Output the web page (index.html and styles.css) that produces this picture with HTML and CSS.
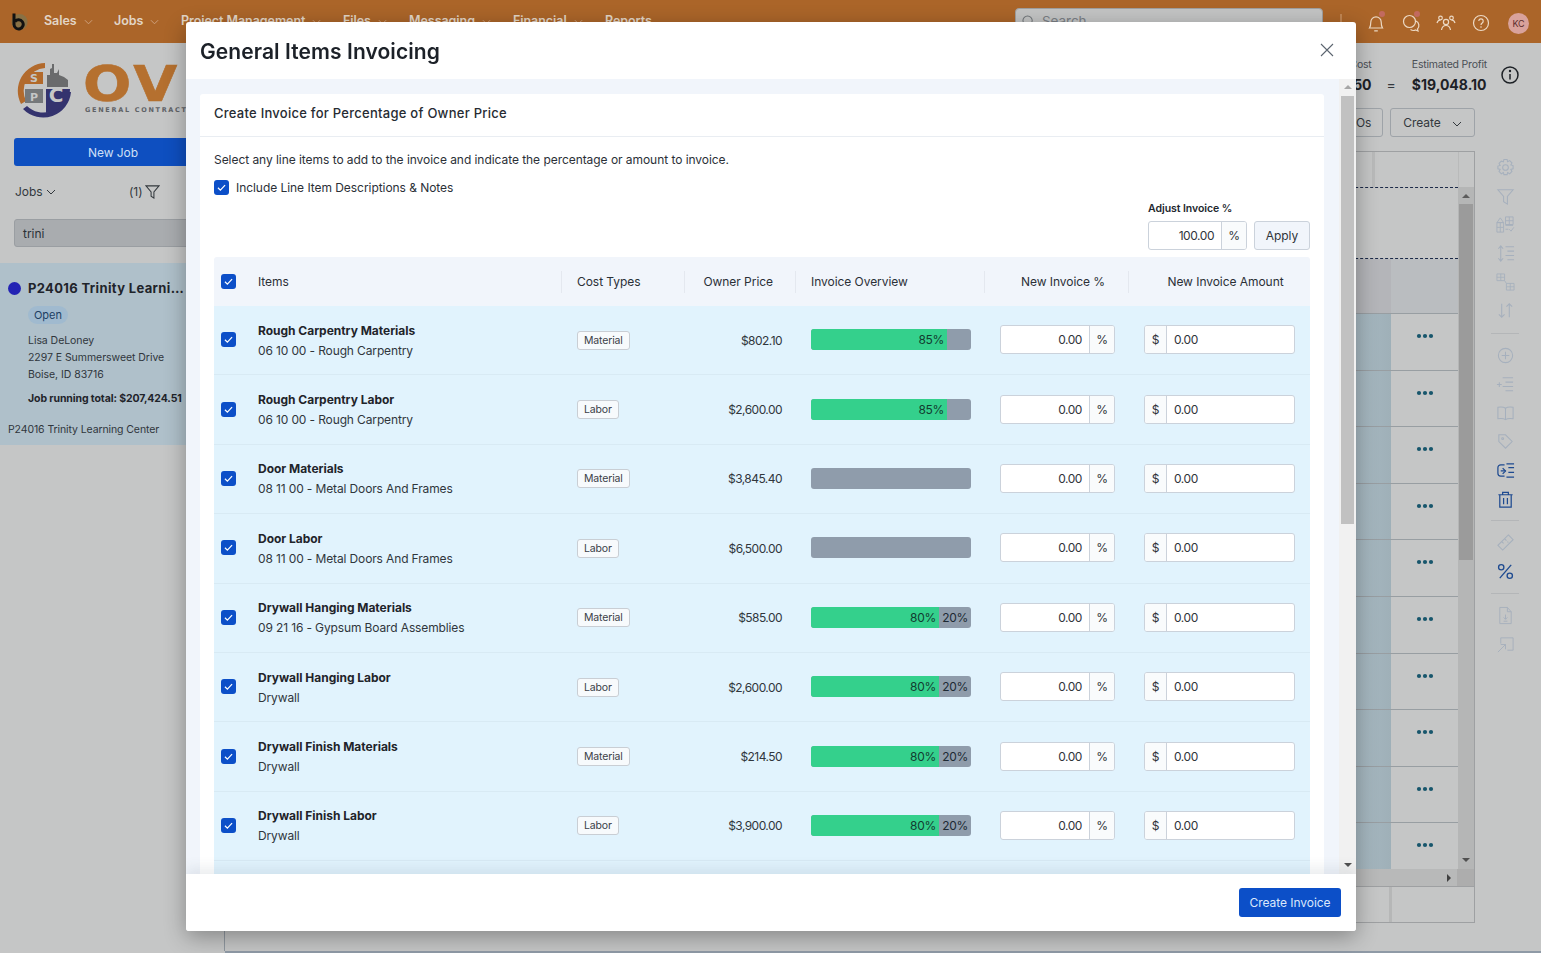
FILE: index.html
```html
<!DOCTYPE html>
<html lang="en">
<head>
<meta charset="utf-8">
<title>General Items Invoicing</title>
<link rel="stylesheet" href="styles.css">
</head>
<body>
<svg class="sprite" aria-hidden="true">
  <symbol id="check" viewBox="0 0 16 16"><path d="M4.2 8.3l2.6 2.6 5-5.4" fill="none" stroke="#fff" stroke-width="1.3"/></symbol>
  <symbol id="chev" viewBox="0 0 10 6"><path d="M1 1l4 4 4-4" fill="none" stroke="currentColor" stroke-width="1"/></symbol>
  <symbol id="dots" viewBox="0 0 18 6"><circle cx="3" cy="3" r="2.1"/><circle cx="9" cy="3" r="2.1"/><circle cx="15" cy="3" r="2.1"/></symbol>
</svg>

<div class="app">
  <header class="topbar">
    <svg class="brand" viewBox="0 0 20 20"><circle cx="10.500" cy="11" r="8" fill="#6d7b5c" opacity=".55"/><path d="M5 2.500v11a4.600 4.600 0 1 0 1-3" fill="none" stroke="#111" stroke-width="3"/></svg>
    <nav class="nav">
      <span class="nav-item nav-sales">Sales <svg class="nav-chev"><use href="#chev"/></svg></span>
      <span class="nav-item nav-jobs">Jobs <svg class="nav-chev"><use href="#chev"/></svg></span>
      <span class="nav-item nav-pm">Project Management <svg class="nav-chev"><use href="#chev"/></svg></span>
      <span class="nav-item nav-files">Files <svg class="nav-chev"><use href="#chev"/></svg></span>
      <span class="nav-item nav-msg">Messaging <svg class="nav-chev"><use href="#chev"/></svg></span>
      <span class="nav-item nav-fin">Financial <svg class="nav-chev"><use href="#chev"/></svg></span>
      <span class="nav-item">Reports</span>
    </nav>
    <div class="search">
      <svg class="search-icon" viewBox="0 0 14 14"><circle cx="6" cy="6" r="5" fill="none" stroke="#6f7478" stroke-width="1.100"/></svg>
      <span>Search</span>
    </div>
    <div class="top-icons">
      <svg class="top-icon" viewBox="0 0 20 20"><path d="M10 1v18M1 10h18" stroke="#d6a77c" stroke-width="1" fill="none"/></svg>
      <span class="top-icon-wrap"><svg class="top-icon" viewBox="0 0 20 20"><path d="M3.500 15c1.200-1.700 1.300-3.500 1.300-6a5.200 5.200 0 0 1 10.400 0c0 2.500.1 4.300 1.300 6zM8.200 17.800h3.600" fill="none" stroke="#ecd9c4" stroke-width="1.200"/></svg><i class="dot"></i></span>
      <span class="top-icon-wrap"><svg class="top-icon" viewBox="0 0 20 20"><circle cx="8.500" cy="8.500" r="6" fill="none" stroke="#ecd9c4" stroke-width="1.200"/><path d="M15 8a5 5 0 0 1 1.500 8l.5 2-2.500-1a5 5 0 0 1-5-.5" fill="none" stroke="#ecd9c4" stroke-width="1.200"/></svg><i class="dot"></i></span>
      <svg class="top-icon" viewBox="0 0 20 20"><g fill="none" stroke="#ecd9c4" stroke-width="1.200"><circle cx="10" cy="9" r="2.600"/><circle cx="4.500" cy="5" r="1.800"/><circle cx="15.500" cy="5" r="1.800"/><path d="M5.500 17c.5-3 2-4.500 4.500-4.500s4 1.500 4.500 4.500M1 10c.5-2 1.500-3 3.500-3M19 10c-.5-2-1.500-3-3.500-3"/></g></svg>
      <svg class="top-icon" viewBox="0 0 20 20"><g fill="none" stroke="#ecd9c4" stroke-width="1.200"><circle cx="10" cy="10" r="7.500"/><path d="M7.800 8a2.200 2.200 0 1 1 3.400 1.900c-.8.500-1.200 1-1.200 2"/></g><circle cx="10" cy="14" r=".8" fill="#ecd9c4"/></svg>
      <span class="avatar">KC</span>
    </div>
  </header>

  <div class="main">
    <aside class="sidebar">
      <div class="logo">
        <svg class="logo-mark" viewBox="0 0 58 57">
          <path d="M31 1A28 28 0 0 0 7 42l5-3A23 23 0 0 1 31 6z" fill="#b26a2c"/>
          <path d="M9 47a28 28 0 0 0 48-17h-5a23 23 0 0 1-39 14z" fill="#34336e"/>
          <rect x="11" y="10" width="18" height="12" fill="#b26a2c"/>
          <path d="M33 25V13h3V7l2-1v-4h2v9h3l2-4v6l5 2 4 3v7z" fill="#6a6b6c"/>
          <rect x="11" y="27" width="18" height="14" fill="#75787a"/>
          <path d="M32 27h24c0 12-9 22-24 24z" fill="#34336e"/>
          <text x="20" y="20" class="logo-letter">S</text><text x="20" y="38.500" class="logo-letter">P</text><text x="42" y="40" class="logo-letter logo-letter-big">C</text>
        </svg>
        <div class="logo-words"><span class="logo-ov">OV</span><span class="logo-sub">GENERAL CONTRACTORS</span></div>
      </div>
      <button class="new-job">New Job</button>
      <div class="filter-row">
        <span class="jobs-select">Jobs <svg class="mini-chev"><use href="#chev"/></svg></span>
        <span class="filter-count">(1)<svg class="filter-ico" viewBox="0 0 16 16"><path d="M1 2h14L9.500 8.500V15l-3-2V8.500z" fill="none" stroke="#33383d" stroke-width="1.100"/></svg></span>
      </div>
      <div class="side-search">trini</div>
      <article class="job-card">
        <div class="job-title"><i class="job-dot"></i><span class="job-name">P24016 Trinity Learning Center</span></div>
        <div class="job-details">
          <span class="pill">Open</span>
          <p class="addr">Lisa DeLoney</p>
          <p class="addr">2297 E Summersweet Drive</p>
          <p class="addr">Boise, ID 83716</p>
          <p class="running">Job running total: $207,424.51</p>
        </div>
        <p class="job-foot">P24016 Trinity Learning Center</p>
      </article>
    </aside>

    <section class="content">
      <div class="stats">
        <div class="stat stat-cost"><span class="stat-label">Cost</span><strong class="stat-val">50</strong></div>
        <span class="stat-eq">=</span>
        <div class="stat"><span class="stat-label">Estimated Profit</span><strong class="stat-val">$19,048.10</strong></div>
        <svg class="info" viewBox="0 0 20 20"><g fill="none" stroke="#1d2126" stroke-width="1.500"><circle cx="10" cy="10" r="8"/><path d="M10 9v5.500"/></g><circle cx="10" cy="6" r="1.200" fill="#1d2126"/></svg>
      </div>
      <div class="actions">
        <button class="ghost ghost-pos">Open POs</button>
        <button class="ghost ghost-create">Create <svg class="mini-chev"><use href="#chev"/></svg></button>
      </div>
      <div class="table-area">
        <div class="bg-table">
          <div class="bg-head"><i class="bg-head-a"></i><i class="bg-head-b"></i></div>
          <div class="bg-body">
            <div class="bg-rows">
              <div class="bg-dashed"></div>
              <div class="bg-group"><i class="bg-blue"></i><i class="bg-act"></i></div>
              <div class="bg-row"><i class="bg-blue"></i><span class="bg-act"><svg class="more"><use href="#dots"/></svg></span></div>
              <div class="bg-row"><i class="bg-blue"></i><span class="bg-act"><svg class="more"><use href="#dots"/></svg></span></div>
              <div class="bg-row"><i class="bg-blue"></i><span class="bg-act"><svg class="more"><use href="#dots"/></svg></span></div>
              <div class="bg-row"><i class="bg-blue"></i><span class="bg-act"><svg class="more"><use href="#dots"/></svg></span></div>
              <div class="bg-row"><i class="bg-blue"></i><span class="bg-act"><svg class="more"><use href="#dots"/></svg></span></div>
              <div class="bg-row"><i class="bg-blue"></i><span class="bg-act"><svg class="more"><use href="#dots"/></svg></span></div>
              <div class="bg-row"><i class="bg-blue"></i><span class="bg-act"><svg class="more"><use href="#dots"/></svg></span></div>
              <div class="bg-row"><i class="bg-blue"></i><span class="bg-act"><svg class="more"><use href="#dots"/></svg></span></div>
              <div class="bg-row"><i class="bg-blue"></i><span class="bg-act"><svg class="more"><use href="#dots"/></svg></span></div>
              <div class="bg-row bg-row-last"><i class="bg-blue"></i><span class="bg-act"><svg class="more"><use href="#dots"/></svg></span></div>
            </div>
            <div class="bg-vs">
              <i class="arrow-up dark"></i><i class="bg-thumb"></i><i class="bg-vs-gap"></i><i class="arrow-down dark-down"></i>
            </div>
          </div>
          <div class="bg-hs"><i class="arrow-right"></i><i class="bg-hs-corner"></i></div>
          <div class="bg-foot"><i class="bg-foot-cell"></i></div>
        </div>
        <div class="tools">
          <svg class="tool" viewBox="0 0 20 20"><g fill="none" stroke-width="1.100"><path d="M8.300 1.500h3.400l.5 2.500 2.200-1.200 2.400 2.400-1.200 2.200 2.400.6v3.400l-2.400.6 1.200 2.200-2.400 2.400-2.200-1.200-.5 2.100H8.300l-.5-2.100-2.200 1.200-2.400-2.400 1.200-2.200-2.400-.6V8.500l2.400-.6-1.200-2.200 2.400-2.400L7.800 4z"/><circle cx="10" cy="10" r="3"/></g></svg>
          <svg class="tool" viewBox="0 0 20 20"><path d="M2 3h16l-6 7v8l-4-2.500V10z" fill="none" stroke-width="1.100"/></svg>
          <svg class="tool" viewBox="0 0 20 20"><g fill="none" stroke-width="1"><path d="M1 8l3.500-5L8 8zM1 8h7v10H1zM1 13h7M4.500 8v10M10 2h8v8h-8zM10 6h8M14 2v8M10 11h8M10 15h3M14 15l1.800 2 3-4"/></g></svg>
          <svg class="tool" viewBox="0 0 20 20"><g fill="none" stroke-width="1.100"><path d="M5 2v16M2.500 5L5 2l2.500 3M2.500 15L5 18l2.500-3M10 3h9M12 7.500h7M10 12h9M12 16.500h7"/></g></svg>
          <svg class="tool" viewBox="0 0 20 20"><g fill="none" stroke-width=".9"><path d="M1 1h8v7H1zM5 1v7M1 4.500h8M11 11h8v7h-8zM15 11v7M11 14.500h8M9 8l2 3"/></g></svg>
          <svg class="tool" viewBox="0 0 20 20"><g fill="none" stroke-width="1.100"><path d="M6 3v14M3 14l3 3 3-3M14 17V3M11 6l3-3 3 3"/></g></svg>
          <i class="tool-sep"></i>
          <svg class="tool" viewBox="0 0 20 20"><g fill="none" stroke-width="1.100"><circle cx="10" cy="10" r="7.500"/><path d="M10 6v8M6 10h8"/></g></svg>
          <svg class="tool" viewBox="0 0 20 20"><g fill="none" stroke-width="1.100"><path d="M7 3h11M10 7.500h8M7 12h11M10 16.500h8M1 10h5M3.500 7.500v5"/></g></svg>
          <svg class="tool" viewBox="0 0 20 20"><g fill="none" stroke-width="1.100"><path d="M10 4.500C8 3 5 3 2 3.500v12c3-.5 6-.5 8 1 2-1.500 5-1.500 8-1v-12c-3-.5-6-.5-8 1zM10 4.500v12"/></g></svg>
          <svg class="tool" viewBox="0 0 20 20"><g fill="none" stroke-width="1.100"><path d="M3 3h7l7 7-7 7-7-7z"/><circle cx="7" cy="7" r="1"/></g></svg>
          <svg class="tool tool-on" viewBox="0 0 20 20"><g fill="none" stroke-width="1.300"><path d="M9 4H5a3 3 0 0 0-3 3v6a3 3 0 0 0 3 3h4M7 7.500L10 10.500 7 13.500"/><path d="M10 10.500H5M11 3h8M13 7h6M13 12h6M11 17h8"/></g></svg>
          <svg class="tool tool-on" viewBox="0 0 20 20"><g fill="none" stroke-width="1.300"><path d="M2.500 5h15M7 5V2.500h6V5M4 5v13h12V5M8 8.500v6.500M12 8.500v6.500"/></g></svg>
          <i class="tool-sep tool-sep-tight"></i>
          <svg class="tool" viewBox="0 0 20 20"><g fill="none" stroke-width="1.100"><path d="M13 2l5 5L7 18l-5-5zM6 9l2 2M9 6l2 2M12 9l1 1"/></g></svg>
          <svg class="tool tool-on" viewBox="0 0 20 20"><g fill="none" stroke-width="1.400"><path d="M16 3L4 17"/><circle cx="5.500" cy="5.500" r="2.800"/><circle cx="14.500" cy="14.500" r="2.800"/></g></svg>
          <i class="tool-sep"></i>
          <svg class="tool" viewBox="0 0 20 20"><g fill="none" stroke-width="1"><path d="M4 1.500h8l4 4.500v12.500H4zM12 1.500V6h4M10 9v5M8 12l2 2 2-2M8 16h4"/></g></svg>
          <svg class="tool" viewBox="0 0 20 20"><g fill="none" stroke-width="1"><path d="M5 9V3h13v13h-6M2 18l8-8M5 10h5v5"/></g></svg>
        </div>
      </div>
    </section>
  </div>
  <div class="page-foot"></div>
</div>

<div class="modal" role="dialog" aria-label="General Items Invoicing">
  <header class="modal-head">
    <h1 class="modal-title">General Items Invoicing</h1>
    <svg class="close" viewBox="0 0 14 14"><path d="M1 1l12 12M13 1L1 13" stroke="#5c6570" stroke-width="1.100" fill="none"/></svg>
  </header>
  <div class="modal-body">
    <div class="modal-scroll">
      <section class="card">
        <h2 class="card-title">Create Invoice for Percentage of Owner Price</h2>
        <div class="card-content">
          <p class="lead">Select any line items to add to the invoice and indicate the percentage or amount to invoice.</p>
          <label class="include"><span class="cb"><svg><use href="#check"/></svg></span>Include Line Item Descriptions &amp; Notes</label>
          <div class="adjust">
            <div class="adjust-box">
              <span class="adjust-label">Adjust Invoice %</span>
              <div class="adjust-controls">
                <div class="field field-adjust"><span class="field-val right">100.00</span><span class="addon addon-r">%</span></div>
                <button class="apply">Apply</button>
              </div>
            </div>
          </div>
          <div class="grid">
            <div class="row-grid head">
              <div class="c-check"><span class="cb"><svg><use href="#check"/></svg></span></div>
              <div class="th">Items</div>
              <div class="th th-div">Cost Types</div>
              <div class="th th-div th-owner">Owner Price</div>
              <div class="th th-div">Invoice Overview</div>
              <div class="th th-div th-center">New Invoice %</div>
              <div class="th th-div th-center">New Invoice Amount</div>
            </div>

            <div class="row-grid item">
              <div class="c-check"><span class="cb"><svg><use href="#check"/></svg></span></div>
              <div class="c-item"><strong>Rough Carpentry Materials</strong><span>06 10 00 - Rough Carpentry</span></div>
              <div class="c-type"><span class="tag">Material</span></div>
              <div class="c-price">$802.10</div>
              <div class="c-bar"><div class="bar"><span class="bar-a" style="width:85%">85%</span></div></div>
              <div class="c-pct"><div class="field"><span class="field-val right">0.00</span><span class="addon addon-r">%</span></div></div>
              <div class="c-amt"><div class="field"><span class="addon addon-l">$</span><span class="field-val">0.00</span></div></div>
            </div>
            <div class="row-grid item">
              <div class="c-check"><span class="cb"><svg><use href="#check"/></svg></span></div>
              <div class="c-item"><strong>Rough Carpentry Labor</strong><span>06 10 00 - Rough Carpentry</span></div>
              <div class="c-type"><span class="tag">Labor</span></div>
              <div class="c-price">$2,600.00</div>
              <div class="c-bar"><div class="bar"><span class="bar-a" style="width:85%">85%</span></div></div>
              <div class="c-pct"><div class="field"><span class="field-val right">0.00</span><span class="addon addon-r">%</span></div></div>
              <div class="c-amt"><div class="field"><span class="addon addon-l">$</span><span class="field-val">0.00</span></div></div>
            </div>
            <div class="row-grid item">
              <div class="c-check"><span class="cb"><svg><use href="#check"/></svg></span></div>
              <div class="c-item"><strong>Door Materials</strong><span>08 11 00 - Metal Doors And Frames</span></div>
              <div class="c-type"><span class="tag">Material</span></div>
              <div class="c-price">$3,845.40</div>
              <div class="c-bar"><div class="bar"></div></div>
              <div class="c-pct"><div class="field"><span class="field-val right">0.00</span><span class="addon addon-r">%</span></div></div>
              <div class="c-amt"><div class="field"><span class="addon addon-l">$</span><span class="field-val">0.00</span></div></div>
            </div>
            <div class="row-grid item">
              <div class="c-check"><span class="cb"><svg><use href="#check"/></svg></span></div>
              <div class="c-item"><strong>Door Labor</strong><span>08 11 00 - Metal Doors And Frames</span></div>
              <div class="c-type"><span class="tag">Labor</span></div>
              <div class="c-price">$6,500.00</div>
              <div class="c-bar"><div class="bar"></div></div>
              <div class="c-pct"><div class="field"><span class="field-val right">0.00</span><span class="addon addon-r">%</span></div></div>
              <div class="c-amt"><div class="field"><span class="addon addon-l">$</span><span class="field-val">0.00</span></div></div>
            </div>
            <div class="row-grid item">
              <div class="c-check"><span class="cb"><svg><use href="#check"/></svg></span></div>
              <div class="c-item"><strong>Drywall Hanging Materials</strong><span>09 21 16 - Gypsum Board Assemblies</span></div>
              <div class="c-type"><span class="tag">Material</span></div>
              <div class="c-price">$585.00</div>
              <div class="c-bar"><div class="bar"><span class="bar-a" style="width:80%">80%</span><span class="bar-b">20%</span></div></div>
              <div class="c-pct"><div class="field"><span class="field-val right">0.00</span><span class="addon addon-r">%</span></div></div>
              <div class="c-amt"><div class="field"><span class="addon addon-l">$</span><span class="field-val">0.00</span></div></div>
            </div>
            <div class="row-grid item">
              <div class="c-check"><span class="cb"><svg><use href="#check"/></svg></span></div>
              <div class="c-item"><strong>Drywall Hanging Labor</strong><span>Drywall</span></div>
              <div class="c-type"><span class="tag">Labor</span></div>
              <div class="c-price">$2,600.00</div>
              <div class="c-bar"><div class="bar"><span class="bar-a" style="width:80%">80%</span><span class="bar-b">20%</span></div></div>
              <div class="c-pct"><div class="field"><span class="field-val right">0.00</span><span class="addon addon-r">%</span></div></div>
              <div class="c-amt"><div class="field"><span class="addon addon-l">$</span><span class="field-val">0.00</span></div></div>
            </div>
            <div class="row-grid item">
              <div class="c-check"><span class="cb"><svg><use href="#check"/></svg></span></div>
              <div class="c-item"><strong>Drywall Finish Materials</strong><span>Drywall</span></div>
              <div class="c-type"><span class="tag">Material</span></div>
              <div class="c-price">$214.50</div>
              <div class="c-bar"><div class="bar"><span class="bar-a" style="width:80%">80%</span><span class="bar-b">20%</span></div></div>
              <div class="c-pct"><div class="field"><span class="field-val right">0.00</span><span class="addon addon-r">%</span></div></div>
              <div class="c-amt"><div class="field"><span class="addon addon-l">$</span><span class="field-val">0.00</span></div></div>
            </div>
            <div class="row-grid item">
              <div class="c-check"><span class="cb"><svg><use href="#check"/></svg></span></div>
              <div class="c-item"><strong>Drywall Finish Labor</strong><span>Drywall</span></div>
              <div class="c-type"><span class="tag">Labor</span></div>
              <div class="c-price">$3,900.00</div>
              <div class="c-bar"><div class="bar"><span class="bar-a" style="width:80%">80%</span><span class="bar-b">20%</span></div></div>
              <div class="c-pct"><div class="field"><span class="field-val right">0.00</span><span class="addon addon-r">%</span></div></div>
              <div class="c-amt"><div class="field"><span class="addon addon-l">$</span><span class="field-val">0.00</span></div></div>
            </div>
            <div class="row-grid item"></div>
          </div>
        </div>
      </section>
    </div>
    <div class="scrollbar">
      <i class="arrow-up"></i><i class="thumb"></i><i class="track-gap"></i><i class="arrow-down"></i>
    </div>
  </div>
  <footer class="modal-foot"><button class="primary">Create Invoice</button></footer>
</div>
</body>
</html>
```

FILE: styles.css
```css
* { box-sizing: border-box; }
html, body { margin: 0; height: 100%; overflow: hidden; }
body { font-family: Inter, "Noto Sans", "Liberation Sans", sans-serif; font-size: 12px; letter-spacing: -.05px; color: #22272e; background: #c5c6c6; }
p, h1, h2 { margin: 0; }
i { display: block; }
button { font: inherit; letter-spacing: inherit; }
.sprite { display: none; }

/* ---------- dimmed page behind the dialog ---------- */
.app { height: 953px; display: flex; flex-direction: column; }
.topbar { height: 43px; flex: none; background: #ab6529; display: flex; align-items: flex-start; padding: 11px 12px 0 9px; }
.brand { width: 20px; height: 20px; flex: none; }
.nav { display: flex; margin-left: 15px; font-size: 12.500px; font-weight: 600; color: #e2d5c6; line-height: 18px; padding-top: 1px; }
.nav-item { display: flex; align-items: center; gap: 7px; white-space: nowrap; }
.nav-sales { width: 70px; }
.nav-jobs { width: 67px; }
.nav-pm { width: 162px; }
.nav-files { width: 66px; }
.nav-msg { width: 104px; }
.nav-fin { width: 92px; }
.nav-chev { width: 9px; height: 6px; margin-top: 2px; color: #d0a684; }
.search { width: 308px; height: 30px; margin: -3px 0 0 auto; background: #c3c4c4; border: 1px solid #9f9f9f; border-radius: 4px; display: flex; align-items: center; gap: 7px; padding: 0 6px 4px; color: #7a7f84; font-size: 13.500px; }
.search-icon { width: 13px; height: 13px; }
.top-icons { display: flex; align-items: center; gap: 15px; margin: -1px 0 0 8px; height: 26px; }
.top-icon-wrap { position: relative; display: block; height: 20px; }
.top-icon { width: 20px; height: 20px; display: block; }
.dot { position: absolute; top: -2px; right: 1px; width: 6px; height: 6px; border-radius: 50%; background: #c26a5e; }
.avatar { width: 21px; height: 21px; border-radius: 50%; background: #d9a29b; color: #5b2d2b; font-size: 9px; display: flex; align-items: center; justify-content: center; margin-left: 2px; }

.main { flex: 1; display: flex; min-height: 0; }
.sidebar { width: 225px; flex: none; border-right: 1px solid #8f979f; padding-top: 19px; display: flex; flex-direction: column; overflow: hidden; }
.logo { display: flex; height: 59px; padding-left: 14px; gap: 11px; }
.logo-mark { width: 58px; height: 57px; flex: none; }
.logo-letter { font: 700 11px "DejaVu Sans", sans-serif; fill: #c5c6c6; text-anchor: middle; }
.logo-letter-big { font-size: 20px; }
.logo-words { display: flex; flex-direction: column; white-space: nowrap; padding-top: 5px; }
.logo-ov { font: 700 49px/36px "DejaVu Sans", sans-serif; letter-spacing: 3px; color: #b5702f; transform: scaleX(1.16); transform-origin: left; -webkit-text-stroke: .6px #b5702f; }
.logo-sub { font: 700 6.500px/10px "DejaVu Sans", sans-serif; letter-spacing: 1.700px; color: #5f6266; margin: 2px 0 0 2px; }
.new-job { margin: 17px 0 0 14px; width: 198px; height: 28px; border: 0; border-radius: 3px; background: #0e4fc0; color: #cfe0f7; font-size: 12px; padding: 0; text-align: left; text-indent: 74px; }
.filter-row { display: flex; align-items: center; margin: 15px 0 0 15px; height: 20px; color: #33383d; font-size: 12px; }
.jobs-select { width: 114px; display: flex; align-items: center; gap: 3px; }
.mini-chev { width: 10px; height: 6px; margin-top: 2px; color: #33383d; }
.filter-count { display: flex; align-items: center; gap: 2px; }
.filter-ico { width: 15px; height: 15px; }
.side-search { margin: 18px 0 0 14px; height: 28px; width: 198px; background: #a9acaf; border: 1px solid #9a9ea2; border-radius: 3px; padding: 0 8px; line-height: 27px; font-size: 12px; color: #2c3137; }
.job-card { margin-top: 16px; height: 182px; background: #afc0ca; padding: 15px 0 0 8px; }
.job-title { display: flex; align-items: center; gap: 7px; height: 20px; }
.job-dot { width: 13px; height: 13px; border-radius: 50%; background: #2323b4; flex: none; }
.job-name { width: 156px; font-size: 13px; font-weight: 700; letter-spacing: .35px; overflow: hidden; white-space: nowrap; text-overflow: ellipsis; color: #1f242a; }
.job-details { padding-left: 20px; }
.pill { display: inline-block; margin-top: 8px; height: 18px; padding: 0 6px; border-radius: 9px; background: #a0bacf; color: #1d3f63; font-size: 11px; line-height: 18px; }
.addr { font-size: 10.500px; line-height: 17px; color: #30363c; }
.pill + .addr { margin-top: 8px; }
.running { margin-top: 7px; font-size: 10.500px; font-weight: 700; line-height: 17px; color: #1f242a; white-space: nowrap; letter-spacing: -.1px; }
.job-foot { margin-top: 14px; font-size: 10.500px; line-height: 17px; color: #30363c; letter-spacing: -.1px; }

.content { flex: 1; min-width: 0; display: flex; flex-direction: column; align-items: flex-end; }
.stats { display: flex; align-items: flex-start; height: 65px; padding: 14px 21px 0 0; }
.stat { display: flex; flex-direction: column; gap: 2px; }
.stat-label { font-size: 10.500px; line-height: 16px; color: #4a4f55; letter-spacing: -.2px; }
.stat-val { font-size: 14px; line-height: 20px; font-weight: 700; color: #1d2126; letter-spacing: 0; }
.stat-cost { align-items: flex-end; }
.stat-eq { margin: 18px 16px 0 15px; font-size: 14px; line-height: 20px; color: #33383d; }
.info { width: 20px; height: 20px; margin: 8px 0 0 13px; }
.actions { display: flex; gap: 7px; margin-right: 66px; height: 29px; }
.ghost { height: 29px; border: 1px solid #9ea3a8; border-radius: 3px; background: #c5c6c6; color: #33383d; font-size: 12px; }
.ghost-pos { width: 80px; }
.ghost-create { width: 85px; display: flex; align-items: center; justify-content: center; gap: 11px; }
.table-area { display: flex; align-items: flex-start; margin-top: 15px; flex: 1; }
.bg-table { width: 600px; height: 772px; margin-top: -1px; border: 1px solid #9ea0a2; display: flex; flex-direction: column; }
.bg-head { height: 35px; flex: none; display: flex; justify-content: flex-end; }
.bg-head-a { width: 3px; background: #b9baba; margin-right: 83px; }
.bg-head-b { width: 1px; background: #b9baba; margin-right: 15px; }
.bg-body { flex: 1; display: flex; min-height: 0; }
.bg-rows { flex: 1; display: flex; flex-direction: column; overflow: hidden; }
.bg-dashed { height: 72px; flex: none; border-top: 1px dashed #1c2a48; border-bottom: 1px dashed #1c2a48; }
.bg-group { height: 54px; flex: none; display: flex; justify-content: flex-end; background: #b4b5b9; }
.bg-row { height: 56.600px; flex: none; display: flex; justify-content: flex-end; border-top: 1px solid #989ea2; }
.bg-blue { width: 100%; background: linear-gradient(90deg, #a9bbc4 0, #a9bbc4 92%, #9fb0b8 100%); }
.bg-act { width: 67px; flex: none; display: flex; justify-content: center; padding-top: 19px; }
.bg-group .bg-blue { background: #b4b5b9; }
.bg-group .bg-act { background: #babdc0; }
.more { width: 18px; height: 6px; fill: #17566c; }
.bg-vs { width: 16px; flex: none; background: #b5b6b6; display: flex; flex-direction: column; align-items: center; }
.bg-thumb { width: 14px; height: 356px; background: #9b9b9b; margin-top: 6px; }
.bg-vs-gap { flex: 1; }
.bg-hs { height: 18px; flex: none; background: #b8b9b9; display: flex; justify-content: flex-end; align-items: center; border-bottom: 1px solid #9ea0a2; }
.bg-hs-corner { width: 17px; height: 17px; background: #adadad; margin-left: 6px; }
.bg-foot { height: 35px; flex: none; display: flex; justify-content: flex-end; }
.bg-foot-cell { width: 85px; border-left: 3px solid #b6b7b7; }
.arrow-up, .arrow-down { width: 0; height: 0; border-left: 4px solid transparent; border-right: 4px solid transparent; flex: none; }
.arrow-up { border-bottom: 4px solid #a6a6a6; margin-top: 6px; }
.arrow-down { border-top: 4px solid #505050; margin-bottom: 7px; }
.arrow-up.dark { border-bottom-color: #5c5c5c; margin-top: 7px; }
.arrow-down.dark-down { margin-bottom: 7px; }
.arrow-right { width: 0; height: 0; border-top: 4px solid transparent; border-bottom: 4px solid transparent; border-left: 4px solid #404040; }
.tools { width: 66px; display: flex; flex-direction: column; align-items: center; padding: 6px 6px 0 0; gap: 9.700px; flex: none; }
.tool { width: 19px; height: 19px; stroke: #a6b0bd; flex: none; }
.tool-on { stroke: #1e4a90; }
.tool-sep { width: 28px; height: 1px; background: #b4b6b8; margin: 2.800px 0; }
.tool-sep-tight { margin: 1.800px 0; }
.page-foot { height: 2px; flex: none; background: #8f9aa6; margin-left: 225px; }

/* ---------- dialog ---------- */
.modal { position: fixed; left: 186px; top: 22px; width: 1170px; height: 909px; background: #fff; border-radius: 3px; box-shadow: 0 6px 22px rgba(0,0,0,.32); display: flex; flex-direction: column; overflow: hidden; }
.modal-head { height: 57px; flex: none; display: flex; align-items: center; justify-content: space-between; padding: 2px 22px 0 14px; }
.modal-title { font-size: 21px; font-weight: 600; color: #1c2128; letter-spacing: .08px; }
.close { width: 14px; height: 14px; margin-top: -4px; }
.modal-body { flex: 1; min-height: 0; display: flex; background: #f1f5fb; }
.modal-scroll { flex: 1; min-width: 0; overflow: hidden; padding: 15px 15px 0 14px; }
.scrollbar { width: 17px; flex: none; display: flex; flex-direction: column; align-items: center; background: #f1f1f1; }
.thumb { width: 13px; height: 428px; background: #c1c1c1; margin-top: 7px; }
.track-gap { flex: 1; }
.card { background: #fff; border-radius: 3px 3px 0 0; }
.card-title { height: 43px; border-bottom: 1px solid #e9edf2; padding-left: 14px; font-size: 13px; font-weight: 500; line-height: 38px; color: #262b32; letter-spacing: .26px; }
.card-content { padding: 13px 14px 0; }
.lead { line-height: 20px; color: #2b3037; }
.include { display: flex; align-items: center; gap: 7px; height: 20px; margin-top: 7px; color: #2b3037; }
.cb { width: 15px; height: 15px; flex: none; border-radius: 3px; background: #0c4fc8; display: block; }
.cb svg { display: block; width: 15px; height: 15px; }
.adjust { display: flex; justify-content: flex-end; margin-top: 5px; }
.adjust-label { display: block; font-size: 10.500px; font-weight: 600; line-height: 14px; color: #22272e; margin-bottom: 5px; }
.adjust-controls { display: flex; gap: 7px; }
.field { height: 29px; display: flex; background: #fff; border: 1px solid #cbd2db; border-radius: 3px; overflow: hidden; line-height: 27px; color: #2f343a; }
.field-adjust { width: 99px; }
.field-val { flex: 1; padding: 0 7px; letter-spacing: -.45px; }
.field-val.right { text-align: right; }
.addon { flex: none; background: #f9fbfc; text-align: center; }
.addon-r { width: 25px; border-left: 1px solid #cbd2db; }
.addon-l { width: 22px; border-right: 1px solid #cbd2db; }
.apply { width: 56px; height: 29px; background: #f1f5fb; border: 1px solid #cbd2db; border-radius: 3px; color: #2f343a; padding: 0; }
.grid { margin-top: 7px; }
.row-grid { display: grid; grid-template-columns: 44px 304px 123px 111px 189px 144px 181px; }
.head { height: 49px; background: #f1f5fb; border-radius: 3px 3px 0 0; align-items: center; }
.item { height: 69.400px; background: #e1f3fd; border-bottom: 1px solid #d8eaf4; align-items: center; }
.c-check { padding-left: 7px; }
.item .c-check, .c-bar, .c-pct, .c-amt { margin-top: -1px; }
.th { height: 22px; line-height: 22px; color: #2b3037; white-space: nowrap; }
.th-div { border-left: 1px solid #e4e8ef; padding-left: 15px; margin-left: -1px; }
.th-owner { text-align: right; padding: 0 23px 0 0; }
.th-center { text-align: center; padding: 0 0 0 12px; }
.c-item { display: flex; flex-direction: column; line-height: 20px; color: #30363c; letter-spacing: -.13px; padding-top: 1px; }
.c-item strong { font-weight: 700; color: #1f242a; letter-spacing: -.02px; }
.c-type { padding-left: 15px; }
.tag { display: inline-block; height: 19px; padding: 0 6px; border: 1px solid #c9ced4; border-radius: 3px; background: #f7fafc; font-size: 10.500px; line-height: 17px; color: #3a4047; letter-spacing: -.15px; }
.c-price { text-align: right; padding-right: 14px; color: #30363c; letter-spacing: -.55px; }
.c-bar { padding: 0 14px 0 15px; }
.bar { height: 21px; border-radius: 3px; background: #8f9cab; display: flex; overflow: hidden; line-height: 22px; color: #123c30; letter-spacing: -.3px; }
.bar-a { background: #34d08c; text-align: right; padding-right: 3px; }
.bar-b { flex: 1; text-align: right; padding-right: 3px; color: #1d2a33; }
.c-pct { padding: 0 14px 0 15px; }
.c-amt { padding: 0 15px; }
.modal-foot { height: 57px; flex: none; position: relative; background: #fff; box-shadow: 0 -6px 12px rgba(60,80,100,.1); display: flex; justify-content: flex-end; align-items: flex-start; padding: 14px 15px 0 0; }
.primary { width: 102px; height: 29px; background: #0c4fc8; color: #dbe8fb; border: 0; border-radius: 3px; padding: 0; }
```
